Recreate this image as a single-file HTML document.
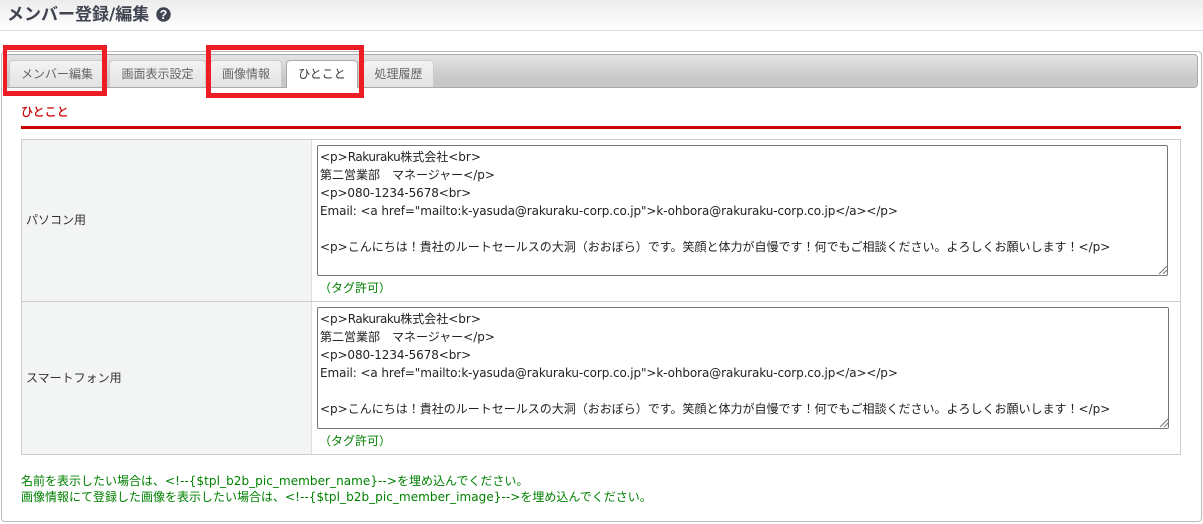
<!DOCTYPE html>
<html lang="ja"><head><meta charset="utf-8"><title>メンバー登録/編集</title>
<style>
html,body{margin:0;padding:0;background:#fff}
body{width:1203px;height:524px;position:relative;overflow:hidden;font:12px/18px "DejaVu Sans","Noto Sans CJK JP",sans-serif;color:#333}
div{position:absolute;box-sizing:border-box}
.t{white-space:pre;color:#222}
.tab{top:60px;height:27px;background:linear-gradient(#f3f3f3,#e2e2e2);border:1px solid #ccc;border-bottom:0;border-radius:4px 4px 0 0;text-align:center;line-height:26px;color:#666}
.r{border:5px solid #ee1c25}
.ta{background:#fff;border:1px solid #767676;border-radius:2px;left:317px}
.g{color:#008000;white-space:pre}
.h{position:absolute;width:12px;height:12px}
.b{letter-spacing:-.45px}
.c{letter-spacing:-.1px}
.d{letter-spacing:.06px}
</style></head><body>
<div style="left:0;top:0;width:1203px;height:31px;background:linear-gradient(#ececec,#fff);border-bottom:1px solid #d8d8e0"></div>
<div style="left:7px;top:4px;font-size:17px;line-height:22px;font-weight:bold;color:#3f4450;white-space:pre">メンバー登録/編集</div>
<svg class="h" style="left:156px;top:7px;width:15px;height:15px" viewBox="0 0 15 15"><circle cx="7.5" cy="7.5" r="7.2" fill="#3f4450"/><text x="7.5" y="12" text-anchor="middle" font-family="Liberation Sans" font-weight="bold" font-size="12.5" fill="#fff">?</text></svg>

<div style="left:1px;top:51px;width:1201px;height:471px;border:1px solid #bbb;border-radius:4px"></div>
<div style="left:5px;top:54px;width:1193px;height:34px;background:linear-gradient(#e4e4e4,#c8c8c8 75%);border:1px solid #aaa;border-radius:4px"></div>
<div class="tab" style="left:9px;width:96px">メンバー編集</div>
<div class="tab" style="left:109px;width:97px">画面表示設定</div>
<div class="tab" style="left:210px;width:72px">画像情報</div>
<div class="tab" style="left:286px;width:72px;height:28px;background:#fff;border-color:#aaa;color:#333">ひとこと</div>
<div class="tab" style="left:363px;width:71px">処理履歴</div>

<div style="left:21px;top:103px;color:#cc0000;-webkit-text-stroke:.25px #cc0000;white-space:pre">ひとこと</div>
<div style="left:21px;top:126px;width:1160px;height:3px;background:#cc0000"></div>

<div style="left:21px;top:139px;width:1160px;height:316px;border:1px solid #ccc"></div>
<div style="left:22px;top:140px;width:289px;height:314px;background:#f3f5f4"></div>
<div style="left:311px;top:140px;width:1px;height:314px;background:#ddd"></div>
<div style="left:22px;top:301px;width:1158px;height:1px;background:#ccc"></div>
<div style="left:26px;top:211px;white-space:pre">パソコン用</div>
<div style="left:26px;top:369px;white-space:pre">スマートフォン用</div>

<div class="ta" style="top:145px;width:851px;height:131px"></div>
<div class="t" style="left:320px;top:148px">&lt;p&gt;<span class="b">Rakuraku</span>株式会社&lt;br&gt;
第二営業部　マネージャー&lt;/p&gt;
<span class="c">&lt;p&gt;080-1234-5678&lt;br&gt;</span>
<span class="c">Email: &lt;a href="mailto:k-yasuda@rakuraku-corp.co.jp"&gt;k-ohbora@rakuraku-corp.co.jp&lt;/a&gt;&lt;/p&gt;</span>

&lt;p&gt;こんにちは！貴社のルートセールスの大洞（おおぼら）です。笑顔と体力が自慢です！何でもご相談ください。よろしくお願いします！&lt;/p&gt;</div>
<svg class="h" style="left:1156px;top:263px" viewBox="0 0 12 12"><path d="M3 11 11 3M7 11 11 7" stroke="#777" fill="none"/></svg>
<div class="g" style="left:319px;top:279px">（タグ許可）</div>

<div class="ta" style="top:307px;width:852px;height:122px"></div>
<div class="t" style="left:320px;top:310px">&lt;p&gt;<span class="b">Rakuraku</span>株式会社&lt;br&gt;
第二営業部　マネージャー&lt;/p&gt;
<span class="c">&lt;p&gt;080-1234-5678&lt;br&gt;</span>
<span class="c">Email: &lt;a href="mailto:k-yasuda@rakuraku-corp.co.jp"&gt;k-ohbora@rakuraku-corp.co.jp&lt;/a&gt;&lt;/p&gt;</span>

&lt;p&gt;こんにちは！貴社のルートセールスの大洞（おおぼら）です。笑顔と体力が自慢です！何でもご相談ください。よろしくお願いします！&lt;/p&gt;</div>
<svg class="h" style="left:1157px;top:416px" viewBox="0 0 12 12"><path d="M3 11 11 3M7 11 11 7" stroke="#777" fill="none"/></svg>
<div class="g" style="left:319px;top:432px">（タグ許可）</div>

<div class="g" style="left:21px;top:473px;line-height:16px">名前を表示したい場合は、<span class="d">&lt;!--{$tpl_b2b_pic_member_name}--&gt;</span>を埋め込んでください。
画像情報にて登録した画像を表示したい場合は、<span class="d">&lt;!--{$tpl_b2b_pic_member_image}--&gt;</span>を埋め込んでください。</div>

<div class="r" style="left:3px;top:45px;width:104px;height:51px;border-left-width:4px"></div>
<div class="r" style="left:206px;top:45px;width:158px;height:53px"></div>
</body></html>
